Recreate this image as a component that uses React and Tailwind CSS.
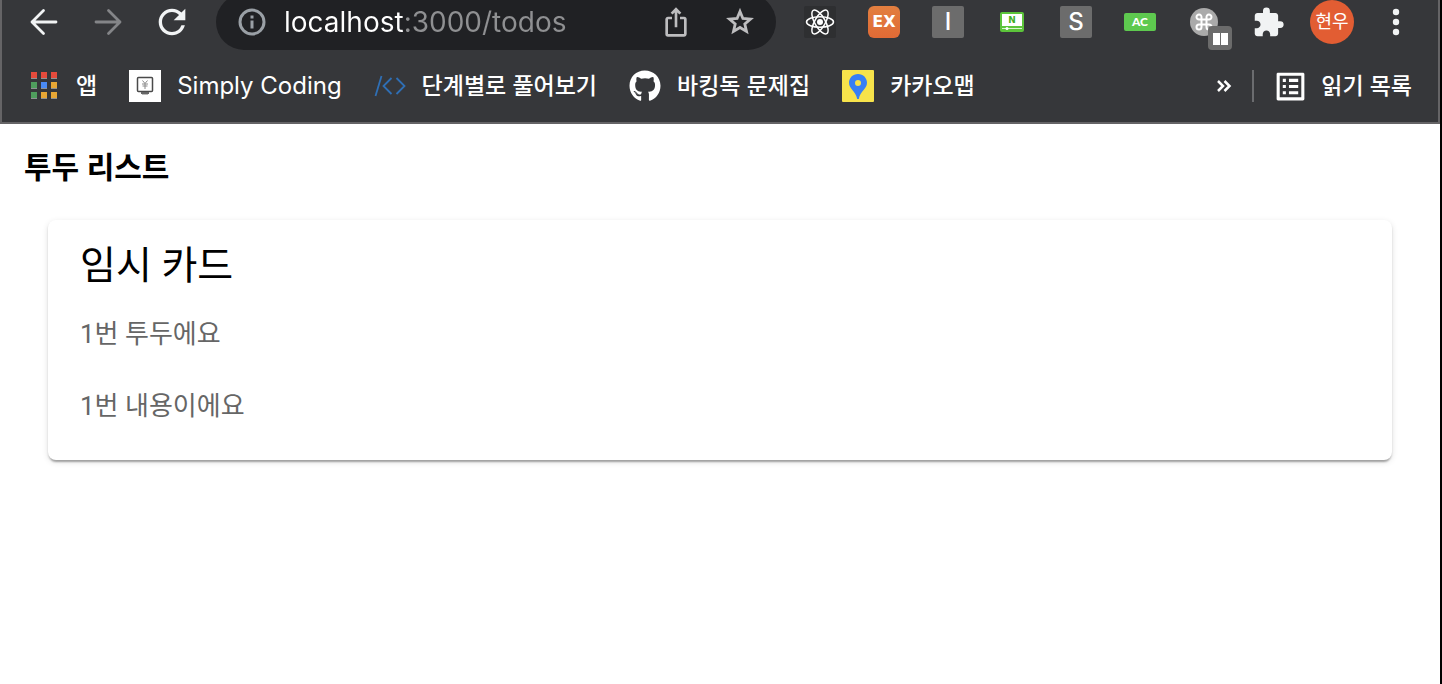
import { useState } from "react";
import { MdExtension, MdIosShare, MdOutlineListAlt, MdRefresh } from "react-icons/md";
import { FaGithub } from "react-icons/fa";

const APP_COLORS = [
  "fill-[#e54b3c]",
  "fill-[#e54b3c]",
  "fill-[#e54b3c]",
  "fill-[#4f9d5d]",
  "fill-[#4a8af4]",
  "fill-[#e8a735]",
  "fill-[#4f9d5d]",
  "fill-[#e8a735]",
  "fill-[#e8a735]",
];

const AppsIcon = () => (
  <svg viewBox="0 0 32 32" className="size-8">
    {APP_COLORS.map((color, i) => {
      const x = 3 + (i % 3) * 10;
      const y = 2 + Math.floor(i / 3) * 10;
      return (
        <g key={i}>
          <rect x={x} y={y} width="6" height="7" fill="#8f9294" />
          <rect x={x} y={y} width="6" height="6" className={color} />
        </g>
      );
    })}
  </svg>
);

const ArrowIcon = ({ flip }) => (
  <svg
    viewBox="0 0 32 32"
    className="size-8"
    fill="none"
    stroke="currentColor"
    strokeWidth="2.8"
    strokeLinecap="round"
    strokeLinejoin="round"
  >
    {flip ? (
      <path d="M4 16H28M16.500 4.500L28 16L16.500 27.500" />
    ) : (
      <path d="M28 16H4M15.500 4.500L4 16L15.500 27.500" />
    )}
  </svg>
);

const InfoIcon = () => (
  <svg viewBox="0 0 32 32" className="size-8 shrink-0 text-[#9aa0a6]">
    <circle cx="16" cy="16" r="12" fill="none" stroke="currentColor" strokeWidth="3" />
    <path d="M14.500 9.500H17.500V12.500H14.500ZM14.500 14.500H17.500V22.500H14.500Z" fill="currentColor" />
  </svg>
);

const StarIcon = () => (
  <svg viewBox="0 0 32 32" className="size-8" fill="none" stroke="currentColor" strokeWidth="2.8">
    <path d="M16 5.500L18.900 12.500L26.500 13.100L20.800 18L22.500 25.400L16 21.500L9.500 25.400L11.200 18L5.500 13.100L13.100 12.500Z" />
  </svg>
);

const SimplyIcon = () => (
  <svg viewBox="0 0 32 32" className="size-8">
    <rect width="32" height="32" fill="#fff" />
    <rect x="8.500" y="7.500" width="15" height="14" rx="1" fill="#fff" stroke="#4a4a4a" strokeWidth="1.500" />
    <path d="M13.500 10.500L16 13.500L18.500 10.500M13 14H19M13.500 16H18.500M16 13.500V19" fill="none" stroke="#8a8a8a" />
    <rect x="12" y="22" width="8" height="2" fill="#666" />
    <rect x="13" y="24" width="6" height="1" fill="#bbb" />
  </svg>
);

const CodeIcon = () => (
  <svg viewBox="0 0 32 32" className="size-8" fill="none" stroke="#2f6fb5" strokeWidth="1.800">
    <path d="M1.500 26L7.500 6" />
    <path d="M17.500 8L9.500 16L17.500 24" />
    <path d="M22.500 8L30.500 16L22.500 24" />
  </svg>
);

const KakaoMapIcon = () => (
  <svg viewBox="0 0 32 32" className="size-8">
    <rect width="32" height="32" rx="1" fill="#f7e34b" />
    <path
      fill="#377ff5"
      fillRule="evenodd"
      d="M16 4C10.800 4 7 8 7 12.800C7 19 13.800 21 15.200 29H16.800C18.200 21 25 19 25 12.800C25 8 21.200 4 16 4ZM16 10A3 3 0 1 1 16 16A3 3 0 1 1 16 10Z"
    />
  </svg>
);

const ReactIcon = () => (
  <svg viewBox="0 0 32 32" className="size-8" fill="none" stroke="#fff" strokeWidth="1.500">
    <rect width="32" height="32" rx="2" fill="#2e2f31" stroke="none" />
    <circle cx="16" cy="16" r="3" fill="#fff" stroke="none" />
    <ellipse cx="16" cy="16" rx="13.500" ry="5.200" />
    <ellipse cx="16" cy="16" rx="13.500" ry="5.200" transform="rotate(60 16 16)" />
    <ellipse cx="16" cy="16" rx="13.500" ry="5.200" transform="rotate(120 16 16)" />
  </svg>
);

const SubtitleIcon = () => (
  <span className="flex h-5 w-6 flex-col items-center rounded-xs bg-[#5cc43a] px-0.5 pt-0.5">
    <span className="flex h-3 w-full items-center justify-center bg-white font-['DejaVu_Sans'] text-[9px] leading-3 font-bold text-[#3fae25]">
      N
    </span>
    <svg viewBox="0 0 20 4" className="h-1 w-full">
      <path d="M0 2.500H20" stroke="#d9f5cf" />
      <circle cx="5" cy="2.500" r="1.500" fill="#fff" />
    </svg>
  </span>
);

const CommandIcon = () => (
  <span className="relative block size-7">
    <svg viewBox="0 0 28 28" className="size-7">
      <circle cx="14" cy="14" r="14" fill="#aaa" />
      <path
        d="M11.500 11.500V9.200A2.500 2.500 0 1 0 9 11.500H19A2.500 2.500 0 1 0 16.500 9.200V19A2.500 2.500 0 1 0 19 16.500H9A2.500 2.500 0 1 0 11.500 19Z"
        fill="none"
        stroke="#fff"
        strokeWidth="2"
      />
    </svg>
    <span className="absolute top-[18px] left-[18px] flex size-6 items-center justify-center gap-px rounded bg-[#6b6b6b] pt-0.5">
      <span className="h-3 w-[7px] bg-white" />
      <span className="h-3 w-[7px] bg-white" />
    </span>
  </span>
);

const extensions = [
  { name: "React Developer Tools", icon: <ReactIcon /> },
  {
    name: "EX",
    icon: (
      <span className="flex size-8 items-center justify-center rounded-md bg-linear-to-b from-[#e27f40] to-[#e06a35] font-['DejaVu_Sans'] text-base font-bold text-white">
        EX
      </span>
    ),
  },
  {
    name: "I",
    icon: (
      <span className="flex size-8 items-center justify-center rounded-xs bg-[#6c6c6c] text-2xl font-medium text-white">
        I
      </span>
    ),
  },
  { name: "Subtitles", icon: <SubtitleIcon /> },
  {
    name: "S",
    icon: (
      <span className="flex size-8 items-center justify-center rounded-xs bg-[#6c6c6c] text-2xl font-medium text-white">
        S
      </span>
    ),
  },
  {
    name: "AC",
    icon: (
      <span className="flex h-[18px] w-8 items-center justify-center rounded-xs bg-[#5ec94f] font-[Lato] text-xs font-black text-white">
        AC
      </span>
    ),
  },
  { name: "Shortcuts", icon: <CommandIcon /> },
  { name: "Extensions", icon: <MdExtension size={33} /> },
];

const bookmarks = [
  { title: "앱", icon: <AppsIcon /> },
  { title: "Simply Coding", icon: <SimplyIcon />, latin: true },
  { title: "단계별로 풀어보기", icon: <CodeIcon /> },
  { title: "바킹독 문제집", icon: <FaGithub size={32} /> },
  { title: "카카오맵", icon: <KakaoMapIcon /> },
];

const todos = [{ id: 1, title: "1번 투두에요", content: "1번 내용이에요" }];

const ToolButton = ({ label, className = "", children }) => (
  <button
    type="button"
    aria-label={label}
    className={`flex h-14 w-16 shrink-0 items-center justify-center ${className}`}
  >
    {children}
  </button>
);

const BrowserBar = () => {
  const [url, setUrl] = useState("localhost:3000/todos");

  return (
    <header className="overflow-hidden border-x-2 border-b-2 border-[#656466] bg-[#36373a] font-[Inter,'Noto_Sans_CJK_KR',sans-serif] text-[#f1f3f4]">
      <div className="-mt-1.5 flex items-center px-2.5">
        <ToolButton label="뒤로">
          <ArrowIcon />
        </ToolButton>
        <ToolButton label="앞으로" className="text-[#848588]">
          <ArrowIcon flip />
        </ToolButton>
        <ToolButton label="새로고침">
          <MdRefresh size={40} />
        </ToolButton>

        <div className="mx-3 flex h-14 min-w-0 flex-1 items-center rounded-full bg-[#202124] pr-1 pl-5 text-[#bdbdbf]">
          <InfoIcon />
          {/* host is white, the rest of the url is dimmed */}
          <input
            type="text"
            aria-label="주소"
            value={url}
            onChange={(e) => setUrl(e.target.value)}
            className="ml-4 min-w-0 flex-1 bg-linear-to-r from-white from-[121px] to-[#8f9092] to-[121px] bg-clip-text text-[28px] text-transparent outline-none"
          />
          <ToolButton label="공유">
            <MdIosShare size={32} />
          </ToolButton>
          <ToolButton label="북마크에 추가">
            <StarIcon />
          </ToolButton>
        </div>

        {extensions.map((ext) => (
          <ToolButton key={ext.name} label={ext.name}>
            {ext.icon}
          </ToolButton>
        ))}
        <ToolButton label="프로필">
          <span className="flex size-11 items-center justify-center rounded-full bg-[#e25d33] text-lg text-white">
            현우
          </span>
        </ToolButton>
        <ToolButton label="메뉴">
          <svg viewBox="0 0 32 32" className="size-8" fill="currentColor">
            <circle cx="16" cy="6" r="3.200" />
            <circle cx="16" cy="16" r="3.200" />
            <circle cx="16" cy="26" r="3.200" />
          </svg>
        </ToolButton>
      </div>

      <nav className="flex h-[72px] items-center gap-8 px-[26px] text-[23px] font-medium whitespace-nowrap text-white">
        {bookmarks.map((item) => (
          <a key={item.title} href="#" className="flex items-center gap-4">
            {item.icon}
            <span className={item.latin ? "text-2xl font-normal" : ""}>{item.title}</span>
          </a>
        ))}
        <div className="ml-auto flex items-center">
          <button type="button" aria-label="북마크 더보기" className="mr-5">
            <svg
              viewBox="0 0 16 16"
              className="size-4"
              fill="none"
              stroke="currentColor"
              strokeWidth="2.500"
            >
              <path d="M2 3L7 8L2 13M8.500 3L13.500 8L8.500 13" />
            </svg>
          </button>
          <span className="h-8 w-0.5 bg-[#6b6c6f]" />
          <button type="button" className="ml-[18px] flex items-center gap-3 font-medium">
            <MdOutlineListAlt size={37} />
            읽기 목록
          </button>
        </div>
      </nav>
    </header>
  );
};

const TodoCard = ({ todo }) => (
  <article className="rounded-lg bg-white px-8 pt-4 pb-[34px] shadow-[0_4px_2px_-2px_rgba(0,0,0,0.2),0_2px_2px_0_rgba(0,0,0,0.14),0_2px_6px_0_rgba(0,0,0,0.12)]">
    <h2 className="text-[39px] leading-[60px]">임시 카드</h2>
    <div className="mt-[18px] space-y-8 text-[26px] leading-10 text-[#666]">
      <p>{todo.title}</p>
      <p>{todo.content}</p>
    </div>
  </article>
);

const App = () => {
  return (
    <div className="min-h-screen border-r-2 border-black bg-white font-[Roboto,'Noto_Sans_CJK_KR',sans-serif] text-black">
      <BrowserBar />
      <main className="px-6 pt-6">
        <h1 className="text-[30px] leading-10 font-bold">투두 리스트</h1>
        <section className="p-6 pt-8">
          {todos.map((todo) => (
            <TodoCard key={todo.id} todo={todo} />
          ))}
        </section>
      </main>
    </div>
  );
};

export default App;
